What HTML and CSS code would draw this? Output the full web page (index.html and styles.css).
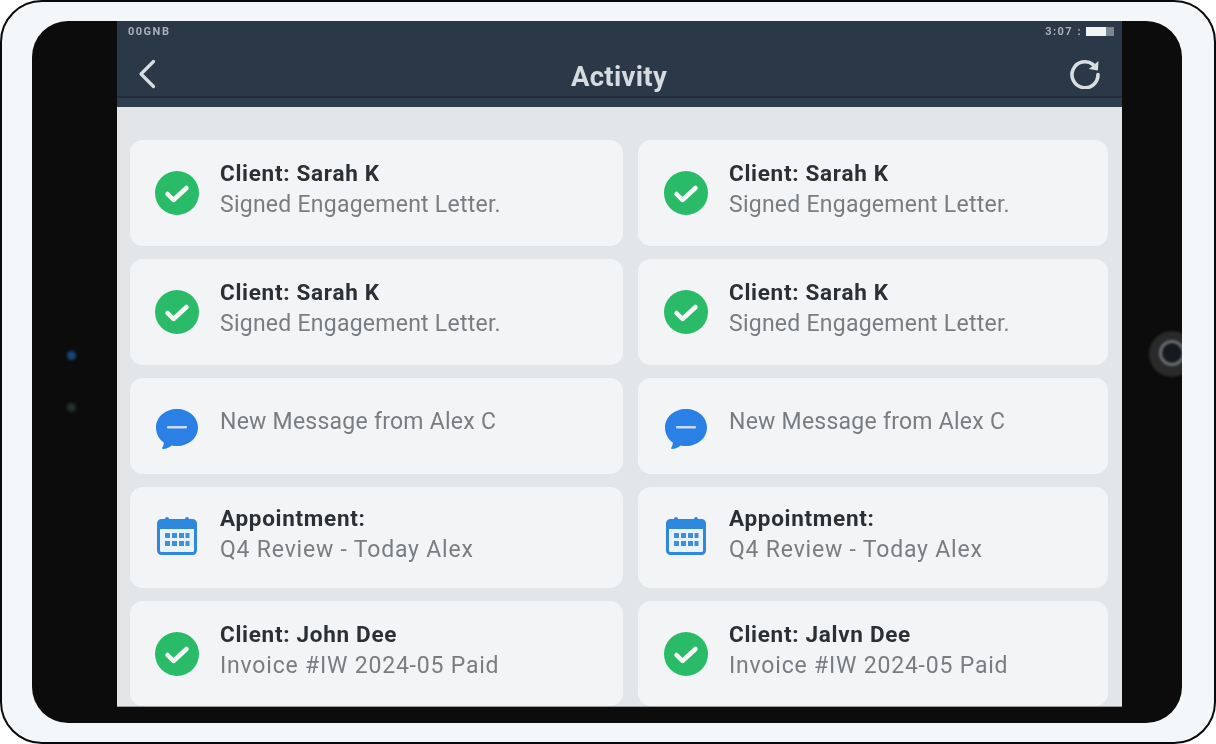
FILE: index.html
```html
<!DOCTYPE html>
<html>
<head>
  <title>Activity</title>
  <link rel="stylesheet" href="styles.css">
</head>
<body>
  <svg class="icon-defs" width="0" height="0">
    <symbol id="check" viewBox="0 0 44 44">
      <circle cx="22" cy="22" r="22" fill="#2abb68"/>
      <path d="M12.500 23l6 6 13-12" fill="none" stroke="#f6f8f6" stroke-width="4.500" stroke-linecap="round" stroke-linejoin="round"/>
    </symbol>
    <symbol id="message" viewBox="0 0 42 40">
      <path d="M21 0c11.600 0 21 8 21 18.500S32.600 37 21 37c-1.900 0-3.700-.2-5.400-.6C13.200 38.400 10 39.800 7 40c-.9 0-1.200-.8-.7-1.400.9-1.200 1.500-2.800 1.500-5C3 30.200 0 24.700 0 18.500 0 8 9.400 0 21 0z" fill="#2a80e4"/>
      <rect x="11" y="17" width="20" height="2.500" rx="1" fill="#c9def6"/>
    </symbol>
    <symbol id="calendar" viewBox="0 0 40 38">
      <rect x="1.500" y="3.500" width="37" height="33" rx="3" fill="#eaf2fb" stroke="#2f87de" stroke-width="3"/>
      <path d="M1.500 6.500a3 3 0 0 1 3-3h31a3 3 0 0 1 3 3v5.500h-37z" fill="#2f87de"/>
      <rect x="8" y="0" width="4" height="7" rx="2" fill="#2f87de"/>
      <rect x="28" y="0" width="4" height="7" rx="2" fill="#2f87de"/>
      <g fill="#3c8ee0">
        <rect x="8" y="16" width="5" height="5"/><rect x="15" y="16" width="5" height="5"/><rect x="22" y="16" width="5" height="5"/><rect x="28.500" y="16" width="4" height="5"/>
        <rect x="8" y="24" width="5" height="5"/><rect x="15" y="24" width="5" height="5"/><rect x="22" y="24" width="5" height="5"/><rect x="28.500" y="24" width="4" height="5"/>
      </g>
    </symbol>
  </svg>

  <div class="frame">
    <div class="tablet">
      <div class="screen">
        <div class="topbar">
          <div class="status">
            <span class="carrier">00GNB</span>
            <span class="clock">3:07 :</span>
            <span class="battery"><span class="battery-level"></span></span>
          </div>
          <div class="nav">
            <svg class="nav-icon" viewBox="0 0 32 30" width="32" height="30">
              <path d="M16.500 2.500L4 15l12.500 12.500" fill="none" stroke="#d8dde1" stroke-width="3.200" stroke-linecap="round" stroke-linejoin="round"/>
            </svg>
            <h1 class="nav-title">Activity</h1>
            <svg class="nav-icon" viewBox="0 0 32 30" width="32" height="30">
              <path d="M24 5.500A13 13 0 1 0 29 15.500" fill="none" stroke="#d8dde1" stroke-width="3.600" stroke-linecap="round"/>
              <path d="M29.500 2l-.6 9.500-9-1.500z" fill="#d8dde1"/>
            </svg>
          </div>
        </div>

        <div class="list">
          <div class="card">
            <svg class="card-icon"><use href="#check"/></svg>
            <div class="card-text"><div class="card-title">Client: Sarah K</div><div class="card-sub">Signed Engagement Letter.</div></div>
          </div>
          <div class="card">
            <svg class="card-icon"><use href="#check"/></svg>
            <div class="card-text"><div class="card-title">Client: Sarah K</div><div class="card-sub">Signed Engagement Letter.</div></div>
          </div>
          <div class="card">
            <svg class="card-icon"><use href="#check"/></svg>
            <div class="card-text"><div class="card-title">Client: Sarah K</div><div class="card-sub">Signed Engagement Letter.</div></div>
          </div>
          <div class="card">
            <svg class="card-icon"><use href="#check"/></svg>
            <div class="card-text"><div class="card-title">Client: Sarah K</div><div class="card-sub">Signed Engagement Letter.</div></div>
          </div>
          <div class="card">
            <svg class="card-icon card-icon-msg"><use href="#message"/></svg>
            <div class="card-text card-text-single"><div class="card-sub">New Message from Alex C</div></div>
          </div>
          <div class="card">
            <svg class="card-icon card-icon-msg"><use href="#message"/></svg>
            <div class="card-text card-text-single"><div class="card-sub">New Message from Alex C</div></div>
          </div>
          <div class="card">
            <svg class="card-icon card-icon-cal"><use href="#calendar"/></svg>
            <div class="card-text"><div class="card-title">Appointment:</div><div class="card-sub card-sub-wide">Q4 Review - Today Alex</div></div>
          </div>
          <div class="card">
            <svg class="card-icon card-icon-cal"><use href="#calendar"/></svg>
            <div class="card-text"><div class="card-title">Appointment:</div><div class="card-sub card-sub-wide">Q4 Review - Today Alex</div></div>
          </div>
          <div class="card">
            <svg class="card-icon"><use href="#check"/></svg>
            <div class="card-text"><div class="card-title">Client: John Dee</div><div class="card-sub card-sub-wide">Invoice #IW 2024-05 Paid</div></div>
          </div>
          <div class="card">
            <svg class="card-icon"><use href="#check"/></svg>
            <div class="card-text"><div class="card-title">Client: Jalvn Dee</div><div class="card-sub card-sub-wide">Invoice #IW 2024-05 Paid</div></div>
          </div>
        </div>
      </div>

      <span class="led led-blue"></span>
      <span class="led led-grey"></span>
      <span class="home-button"></span>
    </div>
  </div>
</body>
</html>
```

FILE: styles.css
```css
/* Page */
body {
  margin: 0;
  height: 744px;
  background-color: #fff;
  font-family: Roboto, "Liberation Sans", sans-serif;
  overflow: hidden;
}

.icon-defs {
  position: absolute;
}

.frame {
  box-sizing: border-box;
  height: 744px;
  padding: 19px 32px 19px 30px;
  border: 2px solid #0a0a0a;
  border-radius: 42px;
  background-color: #f4f7f9;
}

/* Tablet */
.tablet {
  position: relative;
  height: 702px;
  padding-left: 85px;
  border-radius: 36px;
  background-color: #0c0c0c;
  overflow: hidden;
}

.screen {
  width: 1005px;
  height: 685px;
  background-color: #e3e6e9;
  border-bottom: 1px solid #9a9da0;
  overflow: hidden;
  filter: blur(0.7px);
}

.led {
  position: absolute;
  left: 35px;
  width: 9px;
  height: 9px;
  border-radius: 50%;
  filter: blur(1.5px);
}

.led-blue {
  top: 330px;
  background-color: #15497a;
}

.led-grey {
  top: 382px;
  background-color: #26302e;
}

.home-button {
  position: absolute;
  right: -3px;
  top: 319px;
  width: 20px;
  height: 20px;
  border: 3px solid #6a6d71;
  border-radius: 50%;
  background-color: #15181d;
  box-shadow: 0 1px 0 10px #2a2a2a;
  filter: blur(0.8px);
}

/* Top bar */
.topbar {
  height: 86px;
  background: linear-gradient(#2a3848 87%, #222d3b 87%, #222d3b 89%, #2f3e4e 89%);
}

.status {
  display: flex;
  align-items: center;
  height: 20px;
  padding: 0 8px 0 11px;
  color: #aab1b8;
  font-size: 11px;
  font-weight: 700;
}

.carrier {
  flex: 1;
  letter-spacing: 1.500px;
}

.clock {
  margin-right: 4px;
  letter-spacing: 1.500px;
}

.battery {
  width: 28px;
  height: 9px;
  background-color: #7c8791;
}

.battery-level {
  display: block;
  width: 20px;
  height: 9px;
  background-color: #f1f3f4;
}

.nav {
  display: flex;
  align-items: center;
  justify-content: space-between;
  height: 66px;
  padding: 0 21px 0 20px;
}

.nav-title {
  margin: 4px 0 0;
  color: #d6dbdf;
  font-size: 27.500px;
  font-weight: 700;
  letter-spacing: 0.300px;
}

/* Cards */
.list {
  display: grid;
  grid-template-columns: 493px 470px;
  grid-template-rows: 106px 106px 96px 101px 105px;
  gap: 13px 15px;
  padding: 33px 0 0 13px;
}

.card {
  display: flex;
  align-items: center;
  padding-left: 25px;
  border-radius: 13px;
  background-color: #f3f4f5;
}

.card:nth-child(even) {
  padding-left: 26px;
}

.card-icon {
  flex: none;
  width: 44px;
  height: 44px;
}

.card-icon-msg {
  width: 42px;
  height: 40px;
  margin: 6px 1px 0;
}

.card-icon-cal {
  width: 40px;
  height: 38px;
  margin: -3px 2px 0;
}

.card-text {
  margin-left: 21px;
  padding-bottom: 7px;
}

.card-text-single {
  padding-bottom: 9px;
}

.card-title {
  color: #2c2f33;
  font-size: 22.500px;
  font-weight: 700;
  letter-spacing: 0.700px;
  line-height: 30px;
}

.card-sub {
  color: #7a7d80;
  font-size: 23px;
  letter-spacing: 0.250px;
  line-height: 33px;
}

.card-sub-wide {
  letter-spacing: 0.800px;
}
```
